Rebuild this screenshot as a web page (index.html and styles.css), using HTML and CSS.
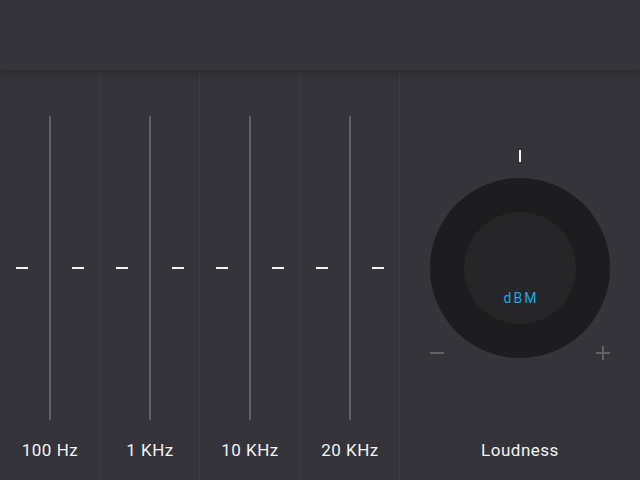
FILE: index.html
```html
<!DOCTYPE html>
<html>
<head>
<meta charset="utf-8">
<link rel="stylesheet" href="styles.css">
</head>
<body>
<div class="app">
  <header class="topbar"></header>
  <main class="mixer">
    <section class="band">
      <div class="slider"><span class="dash"></span><span class="track"></span><span class="dash"></span></div>
      <div class="label">100 Hz</div>
    </section>
    <section class="band">
      <div class="slider"><span class="dash"></span><span class="track"></span><span class="dash"></span></div>
      <div class="label">1 KHz</div>
    </section>
    <section class="band">
      <div class="slider"><span class="dash"></span><span class="track"></span><span class="dash"></span></div>
      <div class="label">10 KHz</div>
    </section>
    <section class="band">
      <div class="slider"><span class="dash"></span><span class="track"></span><span class="dash"></span></div>
      <div class="label">20 KHz</div>
    </section>
    <section class="loud">
      <div class="knob-area">
        <span class="indicator"></span>
        <div class="knob">
          <div class="knob-inner"><span class="unit">dBM</span></div>
        </div>
        <div class="pm">
          <svg class="sign" width="14" height="14" viewBox="0 0 14 14"><path d="M0 7H14" stroke="#626166" stroke-width="2"/></svg>
          <svg class="sign" width="14" height="14" viewBox="0 0 14 14"><path d="M0 7H14M7 0V14" stroke="#626166" stroke-width="2"/></svg>
        </div>
      </div>
      <div class="label">Loudness</div>
    </section>
  </main>
</div>
</body>
</html>
```
FILE: styles.css
```css
html, body {
  margin: 0;
  padding: 0;
  background: #35343a;
}
.app {
  width: 640px;
  height: 480px;
  display: flex;
  flex-direction: column;
  font-family: Roboto, "Liberation Sans", sans-serif;
  overflow: hidden;
}
.topbar {
  height: 70px;
  flex: none;
  background: #35343a;
  box-shadow: 0 1px 8px rgba(0, 0, 0, 0.35);
  position: relative;
  z-index: 1;
}
.mixer {
  flex: 1;
  display: flex;
}
.band {
  width: 100px;
  display: flex;
  flex-direction: column;
  align-items: center;
  box-shadow: inset -1px 0 0 #3e3d43;
  padding-top: 46px;
}
.slider {
  height: 304px;
  display: flex;
  align-items: center;
  gap: 21px;
}
.dash {
  width: 12px;
  height: 2px;
  background: #f4f4f4;
}
.track {
  width: 2px;
  height: 100%;
  background: #5f5e64;
}
.label {
  color: #f2f2f3;
  font-size: 17px;
  font-weight: 400;
  letter-spacing: 0.5px;
  margin-top: 20px;
  line-height: 20px;
}
.loud {
  width: 240px;
  display: flex;
  flex-direction: column;
  align-items: center;
  padding-top: 80px;
}
.knob-area {
  width: 180px;
  height: 226px;
  display: flex;
  flex-direction: column;
  align-items: center;
}
.indicator {
  width: 2px;
  height: 12px;
  background: #f4f4f4;
  margin-bottom: 16px;
}
.knob {
  width: 180px;
  height: 180px;
  border-radius: 50%;
  background: #1d1d1f;
  display: flex;
  align-items: center;
  justify-content: center;
}
.knob-inner {
  width: 112px;
  height: 112px;
  border-radius: 50%;
  background: #262628;
  display: flex;
  align-items: flex-end;
  justify-content: center;
}
.unit {
  color: #1ba6e4;
  font-size: 14px;
  letter-spacing: 2px;
  margin-bottom: 18px;
  margin-right: -2px;
}
.pm {
  width: 180px;
  display: flex;
  justify-content: space-between;
  margin-top: -12px;
}
.sign {
  display: block;
}
.loud .label {
  margin-top: 64px;
}
```
